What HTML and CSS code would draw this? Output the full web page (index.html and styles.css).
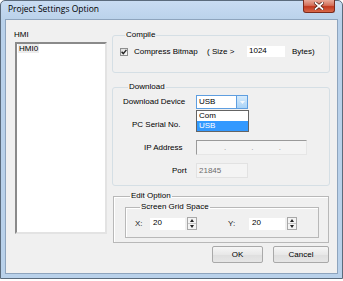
FILE: index.html
```html
<!DOCTYPE html>
<html lang="en">
    <head>
        <meta charset="utf-8">
        <title>Project Settings Option</title>
        <meta name="viewport" content="width=device-width, initial-scale=1">
        <link rel="stylesheet" href="styles.css">
    </head>
    <body>

       <div class="window">
           <div class="titlebar">
               <span class="title">Project Settings Option</span>
               <button class="close-btn">
                   <svg width="10" height="8" viewBox="0 0 10 8">
                       <path d="M1.5 1 L8.5 7 M8.5 1 L1.5 7" stroke="#4a1a10" stroke-width="3.2" stroke-linecap="square"/>
                       <path d="M1.5 1 L8.5 7 M8.5 1 L1.5 7" stroke="#fff" stroke-width="1.8" stroke-linecap="square"/>
                   </svg>
               </button>
           </div>

           <div class="client">
               <div class="hmi-panel">
                   <div class="hmi-label">HMI</div>
                   <div class="listbox">
                       <span class="listbox__item">HMI0</span>
                   </div>
               </div>

               <div class="options">
                   <fieldset class="group">
                       <legend>Compile</legend>
                       <div class="compile-row">
                           <span class="checkbox">
                               <svg width="6" height="6" viewBox="0 0 6 6">
                                   <path d="M0.6 2.8 L2.3 4.6 L5.4 0.9" fill="none" stroke="#222" stroke-width="1.4"/>
                               </svg>
                           </span>
                           <span class="compile-label">Compress Bitmap</span>
                           <span class="size-label">( Size &gt;</span>
                           <span class="edit edit--size">1024</span>
                           <span class="bytes-label">Bytes)</span>
                       </div>
                   </fieldset>

                   <fieldset class="group group--download">
                       <legend>Download</legend>
                       <div class="field-row field-row--device">
                           <span class="field-label">Download Device</span>
                           <div class="combo">
                               <span class="combo__value">USB</span>
                               <span class="combo__button">
                                   <svg width="5" height="3" viewBox="0 0 5 3"><path d="M0 0 H5 L2.5 3 Z" fill="#f4f8fc"/></svg>
                               </span>
                               <ul class="combo__list">
                                   <li>Com</li>
                                   <li class="selected">USB</li>
                               </ul>
                           </div>
                       </div>
                       <div class="field-row">
                           <span class="field-label field-label--serial">PC Serial No.</span>
                       </div>
                       <div class="field-row">
                           <span class="field-label field-label--ip">IP Address</span>
                           <div class="ip-field">
                               <span></span><i>.</i><span></span><i>.</i><span></span><i>.</i><span></span>
                           </div>
                       </div>
                       <div class="field-row">
                           <span class="field-label field-label--port">Port</span>
                           <span class="port-field">21845</span>
                       </div>
                   </fieldset>

                   <fieldset class="classic-group group--edit">
                       <legend>Edit Option</legend>
                       <fieldset class="classic-group group--grid">
                           <legend>Screen Grid Space</legend>
                           <div class="grid-row">
                               <span class="axis-label">X:</span>
                               <span class="edit edit--grid">20</span>
                               <span class="spinner"><b class="up"></b><b class="down"></b></span>
                               <span class="axis-label axis-label--y">Y:</span>
                               <span class="edit edit--grid edit--wide">20</span>
                               <span class="spinner"><b class="up"></b><b class="down"></b></span>
                           </div>
                       </fieldset>
                   </fieldset>

                   <div class="buttons">
                       <button class="btn btn--ok">OK</button>
                       <button class="btn btn--cancel">Cancel</button>
                   </div>
               </div>
           </div>
       </div>

    </body>
</html>
```

FILE: styles.css
```css
* {
    box-sizing: border-box;
}

body {
    margin: 0;
    padding: 0;
    background: #fff;
    font-family: "Liberation Sans", Arial, sans-serif;
    font-size: 8px;
    line-height: 10px;
    color: #000;
}

.window {
    width: 343px;
    height: 279px;
    border: 1px solid #5b6b7c;
    border-radius: 5px 5px 0 0;
    background: linear-gradient(#c9dcf2, #b9d1ea 20px);
    padding: 0 4px 4px;
    display: flex;
    flex-direction: column;
}

.titlebar {
    height: 18px;
    display: flex;
    align-items: flex-start;
    justify-content: space-between;
}

.title {
    font-family: "Open Sans", sans-serif;
    font-size: 8.5px;
    line-height: 16px;
    padding-left: 3px;
}

.close-btn {
    width: 32px;
    height: 13px;
    margin: -1px 3px 0 0;
    padding: 0;
    border: 1px solid #7b2a1c;
    border-top: 0;
    border-radius: 0 0 3px 3px;
    background: linear-gradient(#e8aa9a, #d4705a 45%, #c2391f 55%, #d8684a);
    display: flex;
    align-items: center;
    justify-content: center;
}

.client {
    flex: 1;
    background: #f0f0f0;
    border: 1px solid #8ea4bd;
    padding: 10px 7px 8px 8px;
    display: grid;
    grid-template-columns: 93px 218px;
    align-items: start;
    column-gap: 5px;
}

.hmi-label {
    height: 12px;
}

.listbox {
    margin-left: 1px;
    width: 92px;
    height: 192px;
    background: #fff;
    border: 2px solid;
    border-color: #8a8a8a #e3e3e3 #e3e3e3 #8a8a8a;
    padding: 0 0 0 1px;
}

.listbox__item {
    display: inline-block;
    padding: 0 1px;
    background: #ececec;
    line-height: 9px;
}

/* themed group boxes */

.group {
    margin: 0;
    padding: 6px 8px 15px 7px;
    border: 1px solid #d5dfe5;
    border-radius: 3px;
    min-width: 0;
}

.group legend,
.classic-group legend {
    margin-left: 5px;
    padding: 0 1px;
    line-height: 10px;
}

.compile-row {
    display: flex;
    align-items: center;
    height: 11px;
}

.checkbox {
    width: 8px;
    height: 8px;
    border: 1px solid #8e8f8f;
    background: linear-gradient(135deg, #dcdcdc, #fafafa);
    display: flex;
    align-items: center;
    justify-content: center;
}

.compile-label {
    margin-left: 6px;
    width: 73px;
}

.size-label {
    width: 40px;
}

.edit {
    background: #fff;
    height: 11px;
    padding-left: 2px;
    line-height: 10px;
}

.edit--size {
    width: 38px;
}

.bytes-label {
    margin-left: 7px;
}

.group--download {
    margin-top: 9px;
    padding: 3px 8px 7px 10px;
    display: flex;
    flex-direction: column;
    gap: 8px;
}

.field-row {
    display: flex;
    align-items: center;
    height: 15px;
}

.field-row--device {
    height: 14px;
}

.field-label {
    width: 73px;
}

.field-label--serial {
    padding-left: 9px;
}

.field-label--ip {
    padding-left: 21px;
}

.field-label--port {
    padding-left: 49px;
}

.combo {
    position: relative;
    width: 52px;
    height: 14px;
    border: 1px solid #5e9ee0;
    background: #fff;
    display: flex;
}

.combo__value {
    flex: 1;
    padding-left: 2px;
    line-height: 12px;
}

.combo__button {
    width: 11px;
    background: linear-gradient(#d6ebfc, #a9d3f7);
    border-left: 1px solid #5e9ee0;
    display: flex;
    align-items: center;
    justify-content: center;
}

.combo__list {
    position: absolute;
    top: 14px;
    left: -1px;
    width: 53px;
    margin: 0;
    padding: 0;
    list-style: none;
    background: #fff;
    border: 1px solid #646464;
}

.combo__list li {
    height: 10px;
    padding-left: 2px;
    line-height: 10px;
}

.combo__list .selected {
    background: #3399ff;
    color: #fff;
}

.ip-field {
    width: 111px;
    height: 15px;
    background: #f4f4f4;
    border: 1px solid;
    border-color: #9a9a9a #e6e6e6 #e6e6e6 #9a9a9a;
    display: flex;
    align-items: center;
    padding-left: 1px;
}

.ip-field span {
    width: 26px;
}

.ip-field i {
    width: 1.5px;
    font-style: normal;
    color: #9a9a9a;
    line-height: 6px;
}

.port-field {
    width: 52px;
    height: 15px;
    background: #f4f4f4;
    border: 1px solid #e2e2e2;
    padding-left: 2px;
    line-height: 13px;
    color: #6d6d6d;
}

/* classic etched group boxes */

.classic-group {
    margin: 0;
    min-width: 0;
    border: 1px solid #b8b8b8;
    box-shadow: 1px 1px 0 #fff inset;
}

.group--edit {
    margin: 5px 1px 0;
    padding: 1px 9px 4px 11px;
}

.group--grid {
    padding: 5px 8px 7px 9px;
}

.grid-row {
    display: flex;
    align-items: center;
    height: 13px;
}

.axis-label {
    width: 15px;
    color: #222;
}

.axis-label--y {
    margin-left: 31px;
    width: 21px;
}

.edit--grid {
    width: 35px;
    height: 12px;
    padding-left: 3px;
}

.edit--wide {
    width: 36px;
}

.spinner {
    margin-left: 2px;
    width: 10px;
    height: 13px;
    border: 1px solid #a8a8a8;
    background: #f4f4f4;
    display: flex;
    flex-direction: column;
}

.spinner b {
    flex: 1;
    display: flex;
    align-items: center;
    justify-content: center;
}

.spinner b::after {
    content: "";
    border-left: 2.5px solid transparent;
    border-right: 2.5px solid transparent;
}

.spinner .up {
    border-bottom: 1px solid #c8c8c8;
}

.spinner .up::after {
    border-bottom: 3px solid #222;
}

.spinner .down::after {
    border-top: 3px solid #222;
}

.buttons {
    margin-top: 3px;
    padding-right: 1px;
    display: flex;
    justify-content: flex-end;
    gap: 10px;
}

.btn {
    height: 17px;
    padding: 0;
    border: 1px solid #a9a9a9;
    border-radius: 2px;
    background: linear-gradient(#f6f6f6, #e8e8e8 50%, #dedede 51%, #e6e6e6);
    font-family: inherit;
    font-size: 8px;
    color: #000;
}

.btn--ok {
    width: 51px;
}

.btn--cancel {
    width: 56px;
}
```
